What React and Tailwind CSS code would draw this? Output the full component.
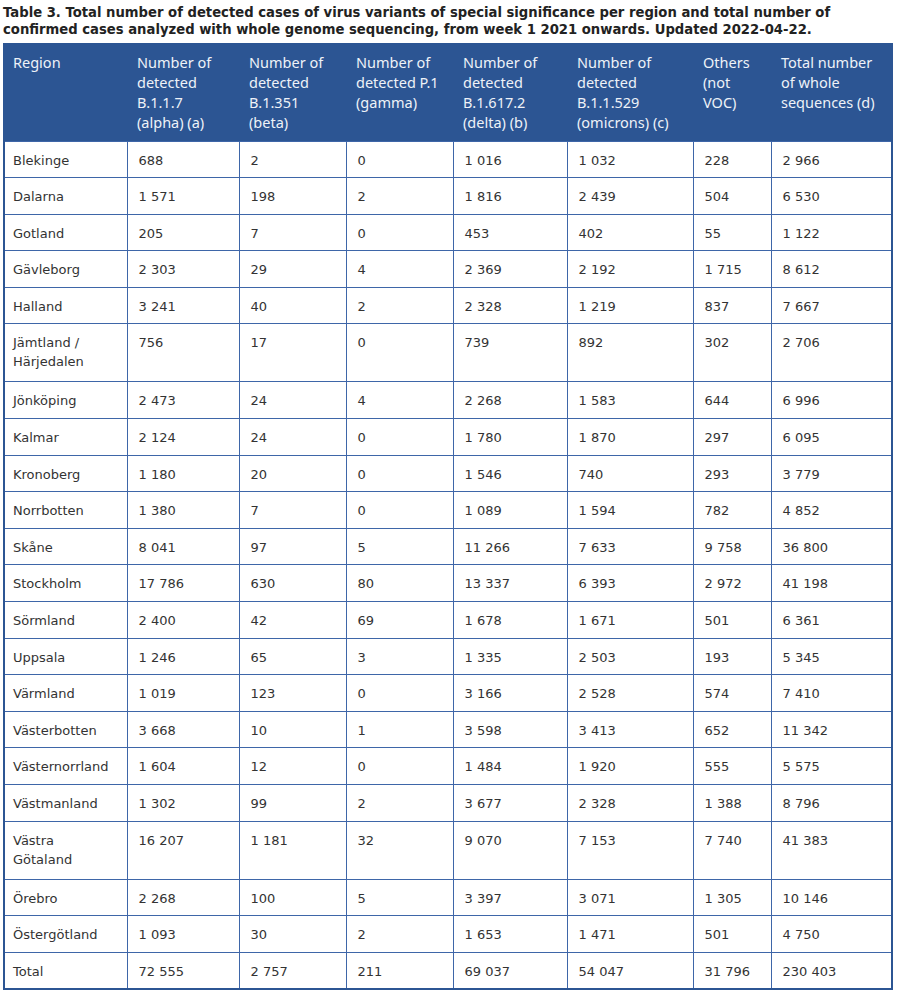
const rows = [
  ["Blekinge", "688", "2", "0", "1 016", "1 032", "228", "2 966"],
  ["Dalarna", "1 571", "198", "2", "1 816", "2 439", "504", "6 530"],
  ["Gotland", "205", "7", "0", "453", "402", "55", "1 122"],
  ["Gävleborg", "2 303", "29", "4", "2 369", "2 192", "1 715", "8 612"],
  ["Halland", "3 241", "40", "2", "2 328", "1 219", "837", "7 667"],
  ["Jämtland /\nHärjedalen", "756", "17", "0", "739", "892", "302", "2 706"],
  ["Jönköping", "2 473", "24", "4", "2 268", "1 583", "644", "6 996"],
  ["Kalmar", "2 124", "24", "0", "1 780", "1 870", "297", "6 095"],
  ["Kronoberg", "1 180", "20", "0", "1 546", "740", "293", "3 779"],
  ["Norrbotten", "1 380", "7", "0", "1 089", "1 594", "782", "4 852"],
  ["Skåne", "8 041", "97", "5", "11 266", "7 633", "9 758", "36 800"],
  ["Stockholm", "17 786", "630", "80", "13 337", "6 393", "2 972", "41 198"],
  ["Sörmland", "2 400", "42", "69", "1 678", "1 671", "501", "6 361"],
  ["Uppsala", "1 246", "65", "3", "1 335", "2 503", "193", "5 345"],
  ["Värmland", "1 019", "123", "0", "3 166", "2 528", "574", "7 410"],
  ["Västerbotten", "3 668", "10", "1", "3 598", "3 413", "652", "11 342"],
  ["Västernorrland", "1 604", "12", "0", "1 484", "1 920", "555", "5 575"],
  ["Västmanland", "1 302", "99", "2", "3 677", "2 328", "1 388", "8 796"],
  ["Västra\nGötaland", "16 207", "1 181", "32", "9 070", "7 153", "7 740", "41 383"],
  ["Örebro", "2 268", "100", "5", "3 397", "3 071", "1 305", "10 146"],
  ["Östergötland", "1 093", "30", "2", "1 653", "1 471", "501", "4 750"],
  ["Total", "72 555", "2 757", "211", "69 037", "54 047", "31 796", "230 403"],
];

const headers = [
  "Region",
  "Number of detected B.1.1.7 (alpha) (a)",
  "Number of detected B.1.351 (beta)",
  "Number of detected P.1 (gamma)",
  "Number of detected B.1.617.2 (delta) (b)",
  "Number of detected B.1.1.529 (omicrons) (c)",
  "Others (not VOC)",
  "Total number of whole sequences (d)",
];

const widths = [123, 112, 107, 107, 114, 126, 78, 121];

export default function App() {
  return (
    <div className="bg-white min-h-[1000px] w-[898px] pl-[3px] pt-[4px]">
      <h1 className="font-['DejaVu_Sans',Verdana,sans-serif] font-bold text-[13.2px] leading-[17px] text-[#222] pr-8">
        Table 3. Total number of detected cases of virus variants of special significance per region and total number of
        confirmed cases analyzed with whole genome sequencing, from week 1 2021 onwards. Updated 2022-04-22.
      </h1>
      <table className="mt-[5px] table-fixed border-collapse w-[888px] border-2 border-[#2c5593]">
        <colgroup>
          {widths.map((w, i) => (
            <col key={i} style={{ width: w }} />
          ))}
        </colgroup>
        <thead>
          <tr className="bg-[#2c5593] h-[97px]">
            {headers.map((h, i) => (
              <th
                key={h}
                className={`align-top text-left font-normal font-['Noto_Sans',sans-serif] text-[14.5px] leading-[20px] text-[#eef2f8] pr-2 pt-[7px] ${
                  i === 0 ? "pl-[8px]" : "pl-[10px]"
                }`}
              >
                {h}
              </th>
            ))}
          </tr>
        </thead>
        <tbody className="font-['DejaVu_Sans',Verdana,sans-serif] text-[13px] text-[#333]">
          {rows.map((r) => {
            const tall = r[0].includes("\n");
            return (
              <tr key={r[0]} className={tall ? "h-[58px]" : "h-[36.6px]"}>
                {r.map((c, i) => (
                  <td
                    key={i}
                    className={`align-top whitespace-pre-line border border-[#3e66a8] pr-2 pt-[9px] leading-[19px] ${
                      i === 0 ? "pl-[8px]" : "pl-[11px]"
                    }`}
                  >
                    {c}
                  </td>
                ))}
              </tr>
            );
          })}
        </tbody>
      </table>
    </div>
  );
}
